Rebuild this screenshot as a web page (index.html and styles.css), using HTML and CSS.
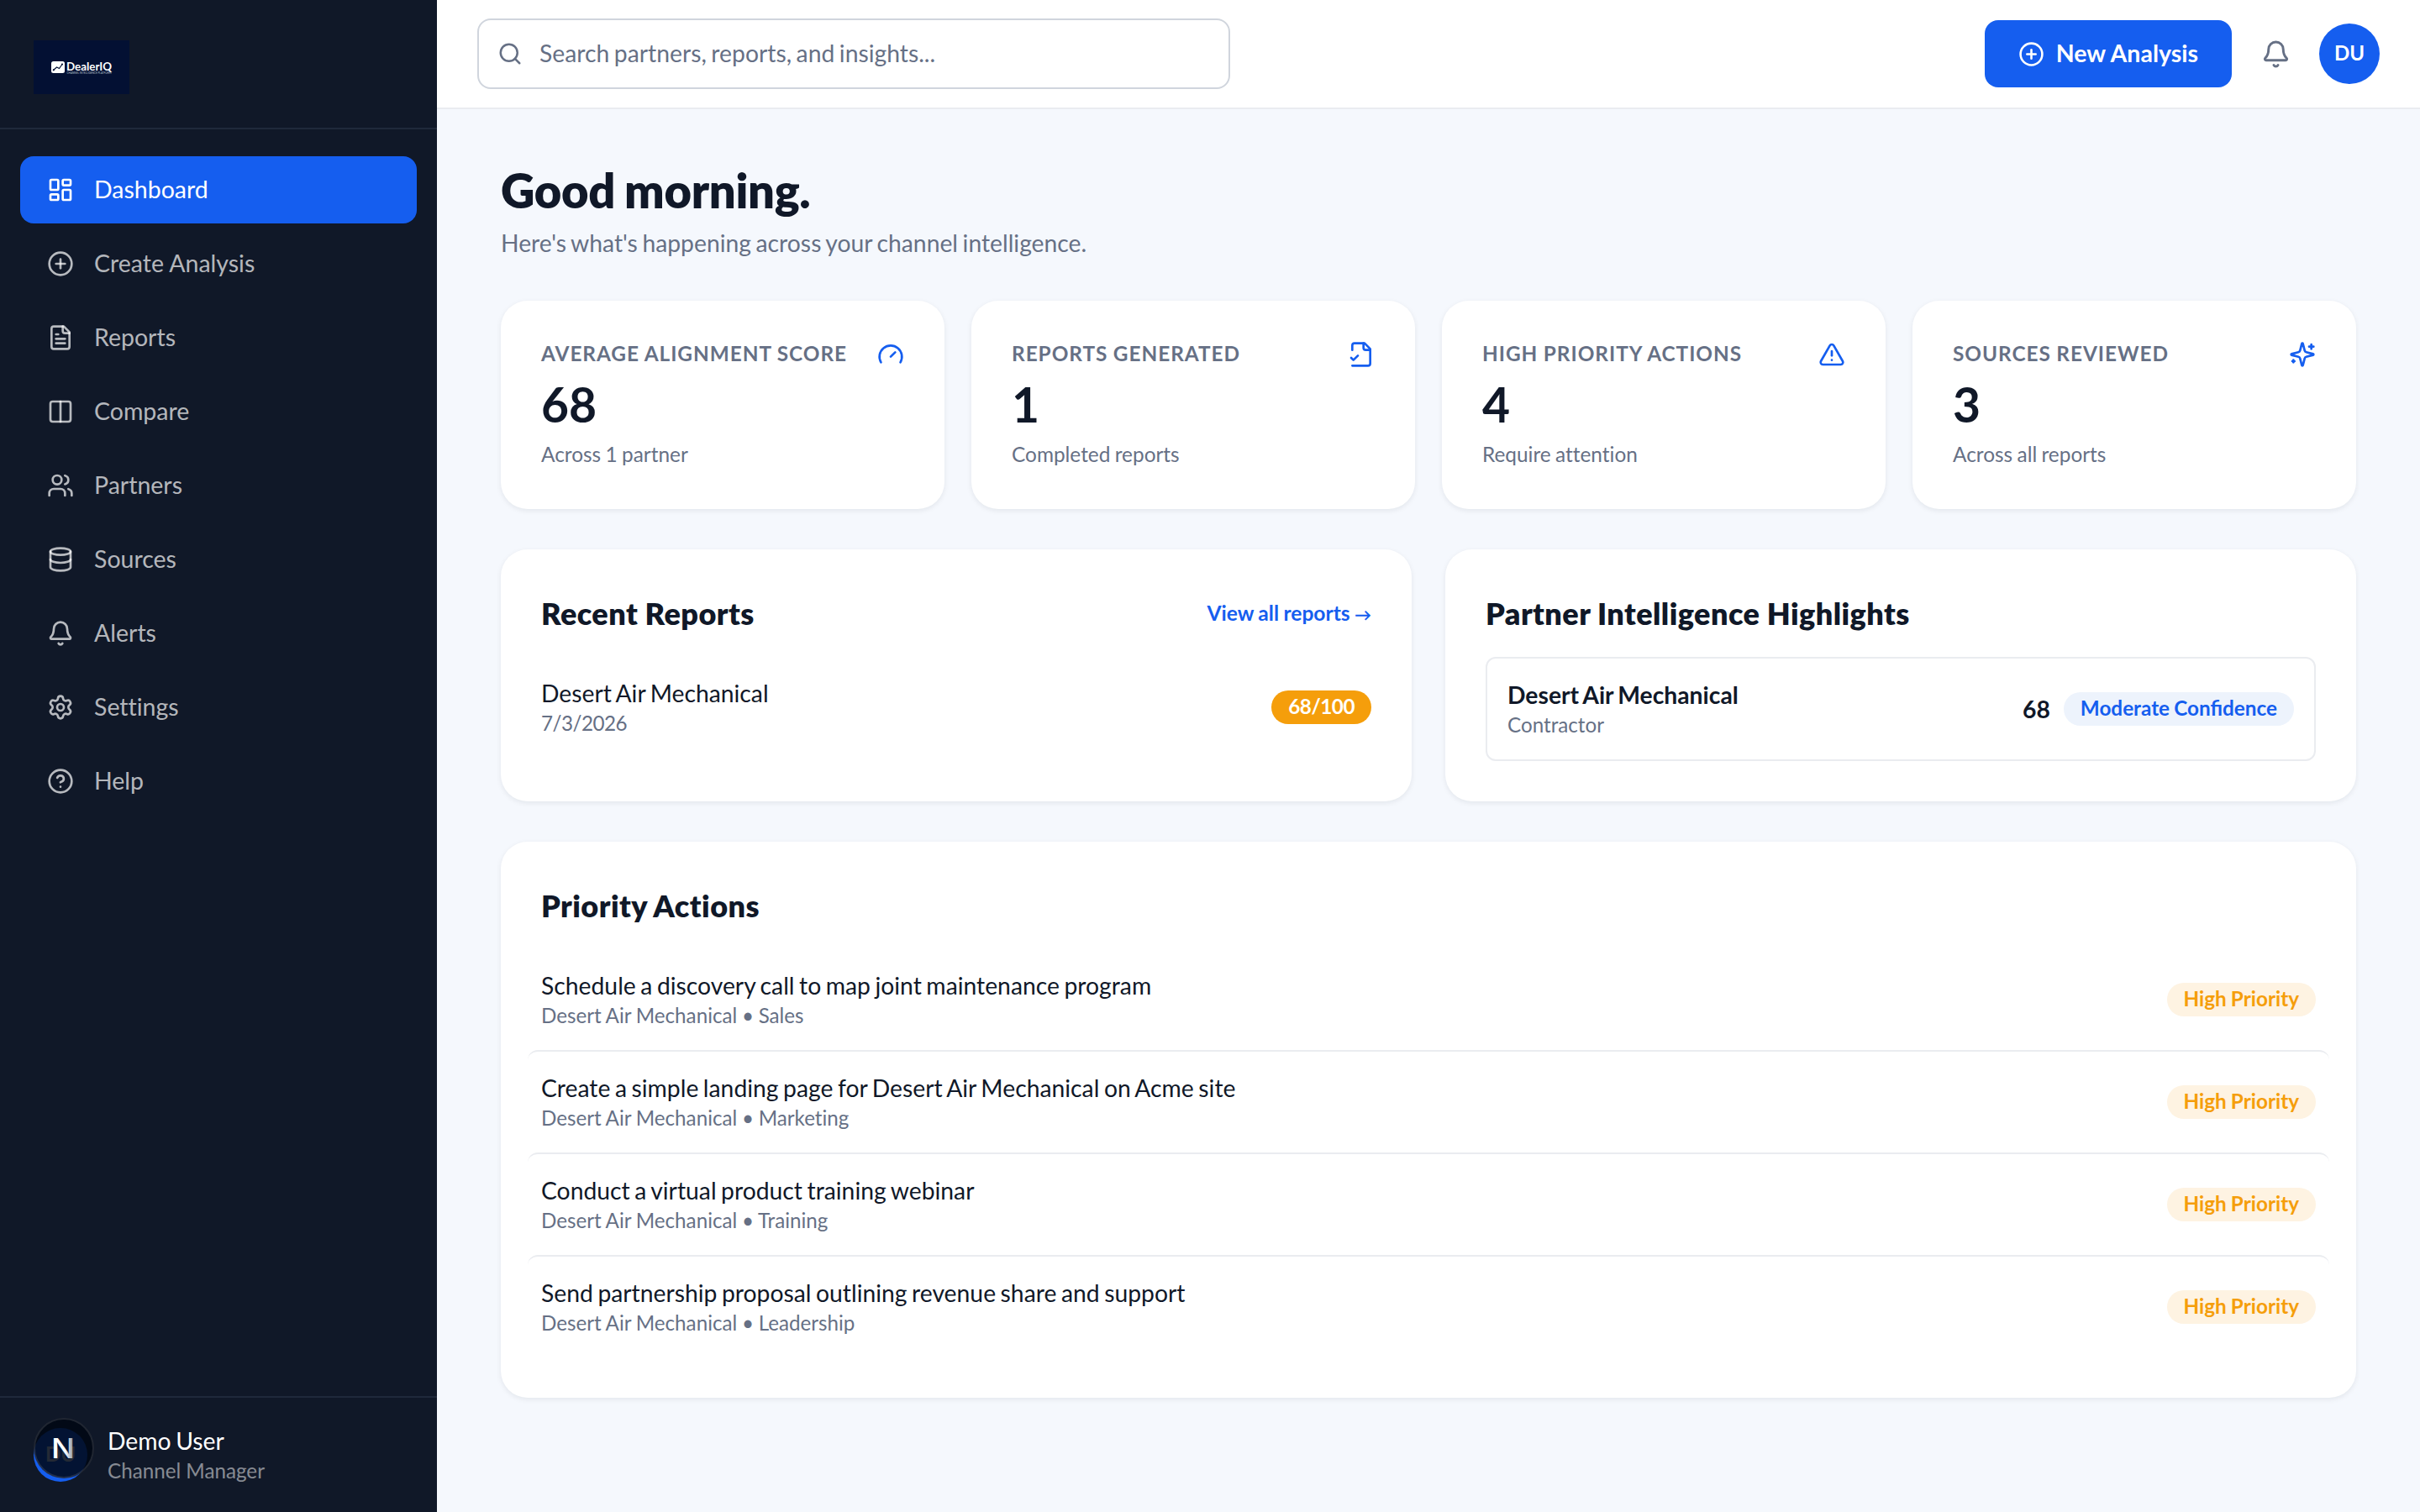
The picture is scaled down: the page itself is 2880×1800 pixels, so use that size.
FILE: index.html
```html
<!DOCTYPE html>
<html lang="en">
<head>
    <meta charset="UTF-8">
    <meta name="viewport" content="width=device-width, initial-scale=1.0">
    <title>DealerIQ - Dashboard</title>
    <link rel="stylesheet" href="styles.css">
</head>
<body>
    <div class="app">
        <aside class="sidebar">
            <div class="brand">
                <svg class="brand-logo" viewBox="0 0 114 64">
                    <rect width="114" height="64" fill="#031033"/>
                    <rect x="21" y="25" width="16" height="14" rx="2.5" fill="#fff"/>
                    <path d="M23.5 35.5l4-3.5 3 1.5 3.5-5" fill="none" stroke="#031033" stroke-width="1.2"/>
                    <circle cx="23.8" cy="35.3" r="1.1" fill="#031033"/>
                    <circle cx="34" cy="28.5" r="1.1" fill="#031033"/>
                    <text x="39" y="35.8" class="brand-name" textLength="54" lengthAdjust="spacingAndGlyphs">DealerIQ</text>
                    <text x="39.5" y="39.8" class="brand-tag" textLength="53" lengthAdjust="spacingAndGlyphs">CHANNEL INTELLIGENCE PLATFORM</text>
                </svg>
            </div>
            <nav class="nav">
                <a class="nav-item active">
                    <svg class="icon" viewBox="0 0 24 24"><rect x="3" y="3" width="7" height="9" rx="1"/><rect x="14" y="3" width="7" height="5" rx="1"/><rect x="14" y="12" width="7" height="9" rx="1"/><rect x="3" y="16" width="7" height="5" rx="1"/></svg>
                    <span>Dashboard</span>
                </a>
                <a class="nav-item">
                    <svg class="icon" viewBox="0 0 24 24"><circle cx="12" cy="12" r="10"/><path d="M8 12h8"/><path d="M12 8v8"/></svg>
                    <span>Create Analysis</span>
                </a>
                <a class="nav-item">
                    <svg class="icon" viewBox="0 0 24 24"><path d="M15 2H6a2 2 0 0 0-2 2v16a2 2 0 0 0 2 2h12a2 2 0 0 0 2-2V7Z"/><path d="M14 2v4a2 2 0 0 0 2 2h4"/><path d="M10 9H8"/><path d="M16 13H8"/><path d="M16 17H8"/></svg>
                    <span>Reports</span>
                </a>
                <a class="nav-item">
                    <svg class="icon" viewBox="0 0 24 24"><rect x="3" y="3" width="18" height="18" rx="2"/><path d="M12 3v18"/></svg>
                    <span>Compare</span>
                </a>
                <a class="nav-item">
                    <svg class="icon" viewBox="0 0 24 24"><path d="M16 21v-2a4 4 0 0 0-4-4H6a4 4 0 0 0-4 4v2"/><path d="M16 3.128a4 4 0 0 1 0 7.744"/><path d="M22 21v-2a4 4 0 0 0-3-3.87"/><circle cx="9" cy="7" r="4"/></svg>
                    <span>Partners</span>
                </a>
                <a class="nav-item">
                    <svg class="icon" viewBox="0 0 24 24"><ellipse cx="12" cy="5" rx="9" ry="3"/><path d="M3 5v14a9 3 0 0 0 18 0V5"/><path d="M3 12a9 3 0 0 0 18 0"/></svg>
                    <span>Sources</span>
                </a>
                <a class="nav-item">
                    <svg class="icon" viewBox="0 0 24 24"><path d="M10.268 21a2 2 0 0 0 3.464 0"/><path d="M3.262 15.326A1 1 0 0 0 4 17h16a1 1 0 0 0 .74-1.673C19.41 13.956 18 12.499 18 8A6 6 0 0 0 6 8c0 4.499-1.411 5.956-2.738 7.326"/></svg>
                    <span>Alerts</span>
                </a>
                <a class="nav-item">
                    <svg class="icon" viewBox="0 0 24 24"><path d="M9.671 4.136a2.34 2.34 0 0 1 4.659 0 2.34 2.34 0 0 0 3.319 1.915 2.34 2.34 0 0 1 2.33 4.033 2.34 2.34 0 0 0 0 3.831 2.34 2.34 0 0 1-2.33 4.033 2.34 2.34 0 0 0-3.319 1.915 2.34 2.34 0 0 1-4.659 0 2.34 2.34 0 0 0-3.32-1.915 2.34 2.34 0 0 1-2.33-4.033 2.34 2.34 0 0 0 0-3.831A2.34 2.34 0 0 1 6.35 6.051a2.34 2.34 0 0 0 3.319-1.915"/><circle cx="12" cy="12" r="3"/></svg>
                    <span>Settings</span>
                </a>
                <a class="nav-item">
                    <svg class="icon" viewBox="0 0 24 24"><circle cx="12" cy="12" r="10"/><path d="M9.09 9a3 3 0 0 1 5.83 1c0 2-3 3-3 3"/><path d="M12 17h.01"/></svg>
                    <span>Help</span>
                </a>
            </nav>
            <div class="user">
                <div class="user-avatar">
                    DU
                    <svg class="dev-badge" viewBox="0 0 72 72">
                        <defs>
                            <linearGradient id="fade" x1="0" y1="0" x2="1" y2="0">
                                <stop offset="0.6" stop-color="#fff"/>
                                <stop offset="1" stop-color="#fff" stop-opacity="0.45"/>
                            </linearGradient>
                        </defs>
                        <circle cx="36" cy="36" r="36" fill="#000714" fill-opacity="0.86"/>
                        <circle cx="36" cy="36" r="35" fill="none" stroke="#fff" stroke-opacity="0.12" stroke-width="2"/>
                        <text x="21" y="48" textLength="28" lengthAdjust="spacingAndGlyphs" class="dev-letter" fill="url(#fade)">N</text>
                    </svg>
                </div>
                <div>
                    <div class="user-name">Demo User</div>
                    <div class="user-role">Channel Manager</div>
                </div>
            </div>
        </aside>

        <div class="page">
            <header class="topbar">
                <div class="search">
                    <svg class="icon icon-search" viewBox="0 0 24 24"><path d="m21 21-4.34-4.34"/><circle cx="11" cy="11" r="8"/></svg>
                    <span>Search partners, reports, and insights...</span>
                </div>
                <div class="topbar-actions">
                    <button class="new-btn">
                        <svg class="icon icon-btn" viewBox="0 0 24 24"><circle cx="12" cy="12" r="10"/><path d="M8 12h8"/><path d="M12 8v8"/></svg>
                        <span>New Analysis</span>
                    </button>
                    <div class="bell">
                        <svg class="icon icon-bell" viewBox="0 0 24 24"><path d="M10.268 21a2 2 0 0 0 3.464 0"/><path d="M3.262 15.326A1 1 0 0 0 4 17h16a1 1 0 0 0 .74-1.673C19.41 13.956 18 12.499 18 8A6 6 0 0 0 6 8c0 4.499-1.411 5.956-2.738 7.326"/></svg>
                    </div>
                    <div class="avatar">DU</div>
                </div>
            </header>

            <main class="content">
                <h1>Good morning.</h1>
                <p class="subtitle">Here's what's happening across your channel intelligence.</p>

                <section class="stats">
                    <div class="card">
                        <div class="stat-head">
                            <span class="stat-label">Average Alignment Score</span>
                            <svg class="icon" viewBox="0 0 24 24"><path d="m12 14 4-4"/><path d="M3.34 19a10 10 0 1 1 17.32 0"/></svg>
                        </div>
                        <div class="stat-value">68</div>
                        <div class="stat-note">Across 1 partner</div>
                    </div>
                    <div class="card">
                        <div class="stat-head">
                            <span class="stat-label">Reports Generated</span>
                            <svg class="icon" viewBox="0 0 24 24"><path d="M4 22h14a2 2 0 0 0 2-2V7l-5-5H6a2 2 0 0 0-2 2v4"/><path d="M14 2v4a2 2 0 0 0 2 2h4"/><path d="m3 15 2 2 4-4"/></svg>
                        </div>
                        <div class="stat-value">1</div>
                        <div class="stat-note">Completed reports</div>
                    </div>
                    <div class="card">
                        <div class="stat-head">
                            <span class="stat-label">High Priority Actions</span>
                            <svg class="icon" viewBox="0 0 24 24"><path d="m21.73 18-8-14a2 2 0 0 0-3.48 0l-8 14A2 2 0 0 0 4 21h16a2 2 0 0 0 1.73-3"/><path d="M12 9v4"/><path d="M12 17h.01"/></svg>
                        </div>
                        <div class="stat-value">4</div>
                        <div class="stat-note">Require attention</div>
                    </div>
                    <div class="card">
                        <div class="stat-head">
                            <span class="stat-label">Sources Reviewed</span>
                            <svg class="icon" viewBox="0 0 24 24"><path d="M9.937 15.5A2 2 0 0 0 8.5 14.063l-6.135-1.582a.5.5 0 0 1 0-.962L8.5 9.936A2 2 0 0 0 9.937 8.5l1.582-6.135a.5.5 0 0 1 .963 0L14.063 8.5A2 2 0 0 0 15.5 9.937l6.135 1.581a.5.5 0 0 1 0 .964L15.5 14.063a2 2 0 0 0-1.437 1.437l-1.582 6.135a.5.5 0 0 1-.963 0z"/><path d="M20 3v4"/><path d="M22 5h-4"/><path d="M4 17v2"/><path d="M5 18H3"/></svg>
                        </div>
                        <div class="stat-value">3</div>
                        <div class="stat-note">Across all reports</div>
                    </div>
                </section>

                <section class="panels">
                    <div class="card">
                        <div class="card-head">
                            <h2>Recent Reports</h2>
                            <a class="link">View all reports <span class="arrow">→</span></a>
                        </div>
                        <div class="row">
                            <div>
                                <div class="row-title">Desert Air Mechanical</div>
                                <div class="row-sub date">7/3/2026</div>
                            </div>
                            <span class="badge badge-score">68/100</span>
                        </div>
                    </div>
                    <div class="card">
                        <div class="card-head">
                            <h2>Partner Intelligence Highlights</h2>
                        </div>
                        <div class="partner">
                            <div>
                                <div class="row-title strong">Desert Air Mechanical</div>
                                <div class="row-sub">Contractor</div>
                            </div>
                            <div class="partner-score">
                                <span class="score">68</span>
                                <span class="badge badge-info">Moderate Confidence</span>
                            </div>
                        </div>
                    </div>
                </section>

                <section class="card">
                    <div class="card-head">
                        <h2>Priority Actions</h2>
                    </div>
                    <div class="row">
                        <div>
                            <div class="row-title">Schedule a discovery call to map joint maintenance program</div>
                            <div class="row-sub">Desert Air Mechanical • Sales</div>
                        </div>
                        <span class="badge badge-warn">High Priority</span>
                    </div>
                    <div class="row">
                        <div>
                            <div class="row-title">Create a simple landing page for Desert Air Mechanical on Acme site</div>
                            <div class="row-sub">Desert Air Mechanical • Marketing</div>
                        </div>
                        <span class="badge badge-warn">High Priority</span>
                    </div>
                    <div class="row">
                        <div>
                            <div class="row-title">Conduct a virtual product training webinar</div>
                            <div class="row-sub">Desert Air Mechanical • Training</div>
                        </div>
                        <span class="badge badge-warn">High Priority</span>
                    </div>
                    <div class="row">
                        <div>
                            <div class="row-title">Send partnership proposal outlining revenue share and support</div>
                            <div class="row-sub">Desert Air Mechanical • Leadership</div>
                        </div>
                        <span class="badge badge-warn">High Priority</span>
                    </div>
                </section>
            </main>
        </div>
    </div>
</body>
</html>
```

FILE: styles.css
```css
* {
    box-sizing: border-box;
}
body {
    margin: 0;
    font-family: Lato, "Liberation Sans", sans-serif;
    font-size: 28.3px;
    word-spacing: -1.7px;
    font-variant-ligatures: none;
    color: #101828;
    background: #f5f8fd;
}
h1, h2, p {
    margin: 0;
}
.app {
    display: flex;
    height: 1800px;
}
.icon {
    width: 32px;
    height: 32px;
    flex-shrink: 0;
    fill: none;
    stroke: currentColor;
    stroke-width: 2;
    stroke-linecap: round;
    stroke-linejoin: round;
}

/* Sidebar */
.sidebar {
    width: 520px;
    flex-shrink: 0;
    display: flex;
    flex-direction: column;
    background: #101828;
    color: #fff;
}
.brand {
    height: 154px;
    padding: 48px 40px 0;
    border-bottom: 2px solid #1f293b;
}
.brand-logo {
    display: block;
    width: 114px;
    height: 64px;
}
.brand-name {
    font: 700 14px Lato, sans-serif;
    fill: #fff;
}
.brand-tag {
    font: 400 3px Lato, sans-serif;
    word-spacing: 0;
    fill: #b9c0cf;
}
.nav {
    flex: 1;
    display: flex;
    flex-direction: column;
    gap: 8px;
    padding: 32px 24px;
}
.nav-item {
    display: flex;
    align-items: center;
    gap: 24px;
    height: 80px;
    padding: 0 32px;
    border-radius: 16px;
    font-size: 28.5px;
    color: rgba(255, 255, 255, 0.7);
}
.nav-item span,
.search span,
.new-btn span {
    padding-bottom: 2px;
}
.nav-item span {
    word-spacing: 0;
}
.nav-item.active {
    background: #155eef;
    color: #fff;
}
.user {
    display: flex;
    align-items: center;
    gap: 24px;
    height: 138px;
    padding: 0 40px;
    border-top: 2px solid #1f293b;
}
.user-avatar {
    position: relative;
    width: 64px;
    height: 64px;
    border-radius: 50%;
    background: #155eef;
    font-size: 24px;
    font-weight: 700;
    line-height: 62px;
    text-align: center;
}
.dev-badge {
    position: absolute;
    left: 0;
    top: -12px;
    width: 72px;
    height: 72px;
}
.dev-letter {
    font: 500 32px Inter, sans-serif;
}
.user-name {
    line-height: 39px;
}
.user-role {
    font-size: 24.2px;
    word-spacing: 0;
    line-height: 32px;
    padding-bottom: 2px;
    color: rgba(255, 255, 255, 0.5);
}

/* Top bar */
.page {
    flex: 1;
    min-width: 0;
}
.topbar {
    display: flex;
    align-items: center;
    justify-content: space-between;
    height: 130px;
    padding: 0 48px;
    background: #fff;
    border-bottom: 2px solid #eaecf0;
}
.search {
    display: flex;
    align-items: center;
    gap: 20px;
    width: 896px;
    height: 84px;
    padding: 0 22px;
    border: 2px solid #d0d5dd;
    border-radius: 16px;
    color: #667085;
}
.icon-search {
    width: 30px;
    height: 30px;
}
.topbar-actions {
    display: flex;
    align-items: center;
    gap: 32px;
}
.new-btn {
    display: flex;
    align-items: center;
    gap: 14px;
    height: 80px;
    padding: 0 40px;
    border: none;
    border-radius: 16px;
    background: #155eef;
    color: #fff;
    font-family: inherit;
    font-size: 28.5px;
    font-weight: 700;
}
.icon-btn {
    width: 31px;
    height: 31px;
}
.bell {
    display: flex;
    justify-content: center;
    width: 40px;
    color: #667085;
}
.icon-bell {
    width: 35px;
    height: 35px;
}
.avatar {
    width: 72px;
    height: 72px;
    border-radius: 50%;
    background: #155eef;
    color: #fff;
    font-size: 24px;
    font-weight: 700;
    line-height: 70px;
    text-align: center;
}

/* Content */
.content {
    width: 2208px;
    margin: 0 auto;
    padding-top: 65px;
}
h1 {
    font-size: 56px;
    font-weight: 800;
    line-height: 64px;
    letter-spacing: -0.3px;
}
.subtitle {
    margin: 8px 0 47px;
    line-height: 44px;
    color: #667085;
}
.card {
    padding: 48px;
    border-radius: 32px;
    background: #fff;
    box-shadow: 0 2px 6px rgba(16, 24, 40, 0.08);
}
.stats {
    display: grid;
    grid-template-columns: repeat(4, 1fr);
    gap: 32px;
    margin-bottom: 48px;
}
.stat-head {
    display: flex;
    justify-content: space-between;
    height: 32px;
    color: #155eef;
}
.stat-label {
    font-size: 24.4px;
    font-weight: 700;
    line-height: 29px;
    letter-spacing: 0.95px;
    word-spacing: -0.4px;
    text-transform: uppercase;
    white-space: nowrap;
    color: #667085;
}
.stat-value {
    margin: 8px 0;
    font-size: 57px;
    font-weight: 700;
    line-height: 70px;
}
.stat-note {
    font-size: 24.4px;
    word-spacing: -0.9px;
    line-height: 34px;
    color: #667085;
}
.panels {
    display: grid;
    grid-template-columns: 1fr 1fr;
    gap: 40px;
    margin-bottom: 48px;
}
.card-head {
    display: flex;
    justify-content: space-between;
    align-items: center;
    height: 56px;
    margin-bottom: 24px;
}
h2 {
    font-size: 36px;
    font-weight: 800;
    line-height: 56px;
    letter-spacing: 0.45px;
    word-spacing: -0.4px;
}
.link {
    padding-bottom: 2px;
    font-size: 24.6px;
    font-weight: 700;
    word-spacing: -0.6px;
    color: #155eef;
}
.arrow {
    font-size: 20px;
}
.row {
    display: flex;
    align-items: center;
    justify-content: space-between;
    height: 120px;
    margin: 0 -16px;
    padding: 0 16px;
    border-radius: 12px;
}
.row + .row {
    height: 122px;
    border-top: 2px solid #eaecf0;
}
.row-title {
    line-height: 39px;
}
.row-title.strong {
    font-weight: 700;
}
.row-sub {
    font-size: 24.2px;
    word-spacing: -0.5px;
    line-height: 31px;
    padding-bottom: 2px;
    color: #667085;
}
.date {
    letter-spacing: -0.5px;
}
.badge {
    height: 40px;
    padding: 0 20px;
    border-radius: 20px;
    font-size: 24.3px;
    font-weight: 700;
    word-spacing: -0.8px;
    line-height: 38px;
}
.badge-score {
    background: #f59e0b;
    color: #fff;
    letter-spacing: -0.5px;
}
.badge-info {
    background: #edf3fc;
    color: #155eef;
    font-variant-ligatures: normal;
}
.badge-warn {
    background: #fef3e2;
    color: #f59e0b;
}
.partner {
    display: flex;
    align-items: center;
    justify-content: space-between;
    height: 124px;
    padding: 0 24px;
    border: 2px solid #eaecf0;
    border-radius: 12px;
}
.partner-score {
    display: flex;
    align-items: center;
    gap: 16px;
}
.score {
    font-weight: 700;
}
```
